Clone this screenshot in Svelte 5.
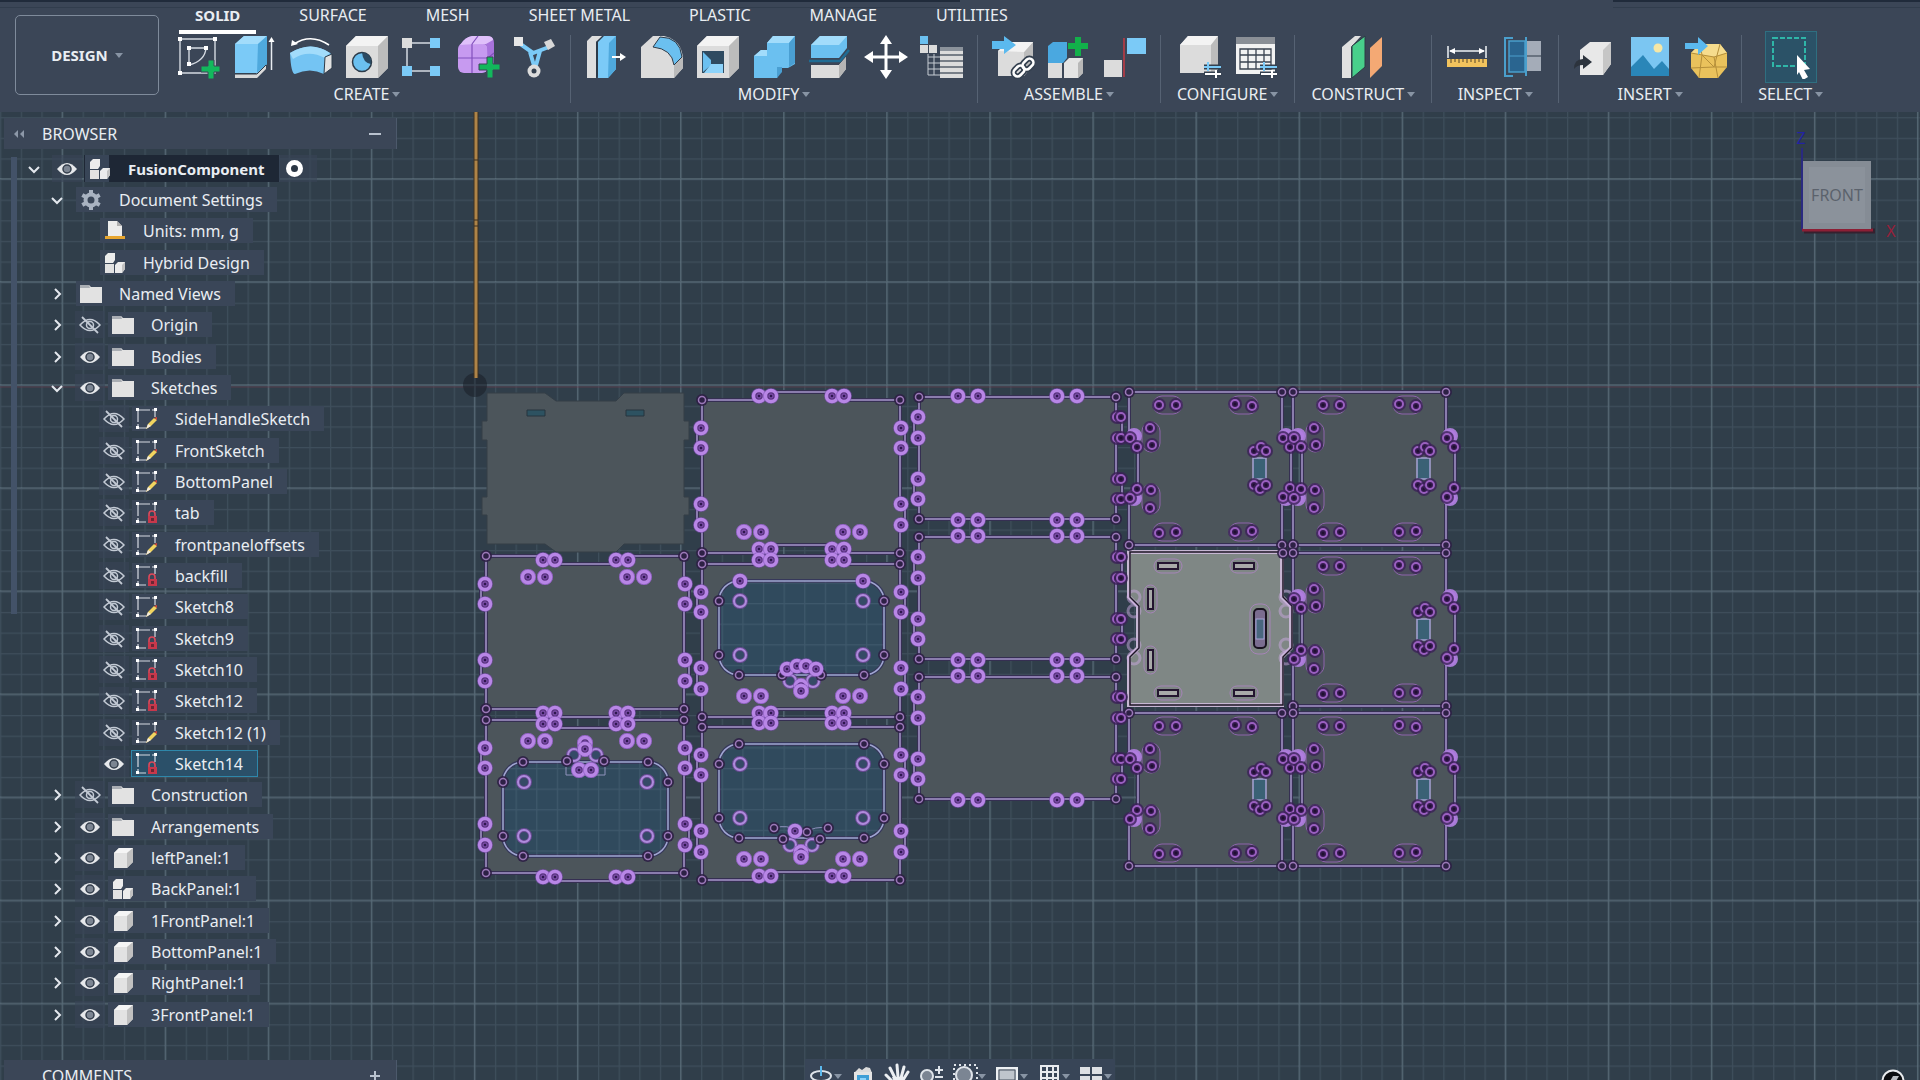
<script>
  const art = {
    sketch: `<path d="M3 4H38V38H3Z" fill="none" stroke="#d5dae2" stroke-width="1.4"/><path d="M12 13H29Q28 26 12 30Z" fill="none" stroke="#d5dae2" stroke-width="1.4"/><path d="M1 2h4v4h-4zM36 2h4v4h-4zM1 36h4v4h-4zM10 11h4v4h-4zM27 11h4v4h-4zM10 27h4v4h-4z" fill="#fff"/><path d="M31 25h6v6h6v6h-6v7h-6v-7h-7v-6h7z" fill="#12b85c" stroke="#3b4657"/>`,
    extrude: `<path d="M2 39L23 39L33 27V34L24 43H2Z" fill="#d9d9d9"/><path d="M2 9L11 1H34V29L24 38H2Z" fill="#7bcaf7"/><path d="M2 9L11 1H34L25 9Z" fill="#a2dcfb"/><path d="M34 1V29L24 38L25 9Z" fill="#4fa9dd"/><path d="M2 39H24L33 30" fill="none" stroke="#2d3a48"/><path d="M38.500 6V35" stroke="#e8edf2" stroke-width="1.5"/><path d="M35.500 7L38.500 2L41.500 7Z" fill="#fff"/>`,
    revolve: `<path d="M1 18Q22 5 41 18L43 20L35 39Q21 32 6 39Q2 39 1 18Z" fill="#74c4f3"/><path d="M1 18Q22 5 41 18Q37 20 36 23Q19 14 4 24Z" fill="#a2dcfb"/><path d="M36 22L43 19V33L35 39Z" fill="#e2e2e2" stroke="#2d3a48"/><path d="M5 9Q22-2 40 10" fill="none" stroke="#fff" stroke-width="1.600"/><path d="M2 11L3 5L9 9Z" fill="#fff"/>`,
    hole: `<path d="M1 11L11 1H43V33L33 43H1Z" fill="#dcdcdc"/><path d="M1 11L11 1H43L33 11Z" fill="#f3f3f3"/><path d="M43 1V33L33 43V11Z" fill="#bcbcbc"/><circle cx="17" cy="27" r="9.500" fill="#6bc0f0" stroke="#2d3a48" stroke-width="1.500"/><path d="M17 17.500A9.500 9.500 0 0 1 26 29Q18 28 17 17.500Z" fill="#2b4a63"/>`,
    pattern: `<path d="M6 8H34M6 8V36H34" fill="none" stroke="#d5dae2" stroke-width="1.500"/><path d="M1 3h10v10h-10z" fill="#dcdcdc"/><path d="M29 3h10v10h-10zM1 31h10v10h-10zM29 31h10v10h-10z" fill="#7bcaf7"/>`,
    form: `<rect x="1" y="8" width="30" height="30" rx="6" fill="#c79af0"/><path d="M3 10Q8 2 15 1H30Q37 1 37 8V28Q36 33 31 35L30 12Q30 9 26 9Z" fill="#a873dc"/><path d="M3 10Q8 2 15 1H30Q36 1 36 5L29 9Z" fill="#dfc0fa"/><path d="M15 9V38M1 23H31L37 18M15 9L21 1" fill="none" stroke="#8250bd" stroke-width="1.200"/><path d="M30 22h6v7h7v6h-7v8h-6v-8h-8v-6h8z" fill="#12b85c" stroke="#3b4657"/>`,
    derive: `<path d="M6 8L20 18L36 12M17 17L22 34L27 16" fill="none" stroke="#7bcaf7" stroke-width="4"/><path d="M1 2h9v9h-9z" fill="#e6e6e6"/><path d="M31 7L38 4L42 11L35 15Z" fill="#d8d8d8"/><circle cx="21" cy="36" r="6.500" fill="#dcdcdc"/><circle cx="21" cy="36" r="2.500" fill="#34404f"/>`,
    presspull: `<path d="M3 6L8 1H18L12 7V43H3Z" fill="#dedede"/><path d="M12 7L19 1V36L12 43Z" fill="#2d3a48"/><path d="M14 7L20 1H32V34L24 43H14Z" fill="#7bcaf7"/><path d="M25 8L32 1V34L24 43Z" fill="#4fa9dd"/><path d="M28 22H38" stroke="#fff" stroke-width="2"/><path d="M36 18L42 22L36 26Z" fill="#fff"/>`,
    fillet: `<path d="M1 12L13 1H24Q42 5 43 24V33L34 43H1Z" fill="#dcdcdc"/><path d="M34 30L43 20V33L34 43Z" fill="#bababa"/><path d="M13 12L20 2Q40 2 42 22L34 30Q32 14 13 12Z" fill="#6bc0f0" stroke="#2d3a48"/>`,
    shell: `<path d="M1 11L11 1H43V33L33 43H1Z" fill="#dcdcdc"/><path d="M1 11L11 1H43L33 11Z" fill="#f3f3f3"/><path d="M43 1V33L33 43V11Z" fill="#bcbcbc"/><path d="M6 16H28V38H6Z" fill="#2f4b61"/><path d="M7 17L15 25V30L7 37Z" fill="#6bc0f0"/><path d="M8 38L15 29H27V38Z" fill="#8dd3fa"/>`,
    combine: `<path d="M2 21L9 15H15V8L21 1H43V29L36 33H30L25 43H2Z" fill="#6bc0f0"/><path d="M15 8L21 1H43L37 8Z" fill="#a2dcfb"/><path d="M43 1V28L37 32V8Z" fill="#4a9fd2"/><path d="M2 21L9 15H15V21Z" fill="#a2dcfb"/><path d="M30 32V37L25 43V32Z" fill="#4a9fd2"/>`,
    split: `<path d="M3 10L12 1H39V13L31 23H3Z" fill="#6bc0f0"/><path d="M3 10L12 1H39L31 10Z" fill="#a2dcfb"/><path d="M3 30H31L38 22V34L31 43H3Z" fill="#dcdcdc"/><path d="M31 30L38 22V34L31 43Z" fill="#b5b5b5"/><path d="M1 26H32L41 15" fill="none" stroke="#1f6c94" stroke-width="2.500"/>`,
    move: `<path d="M22 5V39M5 22H39" stroke="#fff" stroke-width="3"/><path d="M22 0L28 9H16ZM22 44L28 35H16ZM0 22L9 16V28ZM44 22L35 16V28Z" fill="#fff"/>`,
    params: `<path d="M0 1h8v8h-8z" fill="#6bc0f0"/><path d="M0 10h8v8h-8zM9 10h8v8h-8z" fill="#dcdcdc"/><path d="M8 19V40M14 19V40M8 22H20M8 28H20M8 34H20M8 40H20" stroke="#c7ccd4" fill="none"/><path d="M20 12H43V43H20Z" fill="#dcdcdc"/><path d="M20 12H43V16H20Z" fill="#8b929b"/><path d="M20 20H43M20 26H43M20 32H43M20 38H43" stroke="#555f6b" stroke-width="1.300"/>`,
    insertcomp: `<path d="M7 16L17 7H42V30L33 41H7Z" fill="#dcdcdc"/><path d="M42 7V30L33 41V17Z" fill="#bcbcbc"/><path d="M7 16L17 7H42L33 17Z" fill="#f3f3f3"/><path d="M1 6H13V1L25 10L13 19V14H1Z" fill="#5bb9ee"/><g fill="none" stroke="#34404f" stroke-width="6"><rect x="22" y="32" width="12" height="8" rx="4" transform="rotate(-45 28 36)"/><rect x="31" y="25" width="12" height="8" rx="4" transform="rotate(-45 37 29)"/></g><g fill="none" stroke="#fff" stroke-width="2.600"><rect x="22" y="32" width="12" height="8" rx="4" transform="rotate(-45 28 36)"/><rect x="31" y="25" width="12" height="8" rx="4" transform="rotate(-45 37 29)"/></g>`,
    newcomp: `<path d="M1 11L6 7H20V23L16 28H1Z" fill="#4aa8e0"/><path d="M1 28H15V43H1Z" fill="#dcdcdc"/><path d="M17 28L22 23H36V38L31 43H17Z" fill="#e4e4e4"/><path d="M31 28L36 23V38L31 43Z" fill="#b8b8b8"/><path d="M28 2h6v6h7v6h-7v7h-6v-7h-7v-6h7z" fill="#12b04a"/>`,
    joint: `<path d="M1 25h18v17h-18z" fill="#dcdcdc"/><path d="M24 3h19v16h-19z" fill="#7bcaf7"/><path d="M21 3V42" stroke="#c73a42" stroke-width="1.500"/>`,
    config: `<path d="M2 10L10 1H40V34L37 38H2Z" fill="#dcdcdc"/><path d="M2 10L10 1H40L33 10Z" fill="#f3f3f3"/><path d="M40 1V34L33 38V10Z" fill="#bcbcbc"/><path d="M26 32H43M26 39H43" stroke="#34404f" stroke-width="5"/><path d="M26 32H43" stroke="#7bcaf7" stroke-width="2"/><path d="M27 39H43" stroke="#fff" stroke-width="2"/><path d="M30 27V36" stroke="#7bcaf7" stroke-width="2"/><path d="M38 35V43" stroke="#fff" stroke-width="2"/>`,
    table: `<path d="M2 2H41V39H2Z" fill="#f2f2f2"/><path d="M2 2H41V9H2Z" fill="#8a8f96"/><path d="M6 14H37V34H6ZM6 20H37M6 27H37M14 14V34M22 14V34M30 14V34" fill="none" stroke="#3a4350" stroke-width="1.300"/><path d="M26 32H43M26 39H43" stroke="#34404f" stroke-width="5"/><path d="M26 32H43" stroke="#7bcaf7" stroke-width="2"/><path d="M27 39H43" stroke="#fff" stroke-width="2"/><path d="M30 27V36" stroke="#7bcaf7" stroke-width="2"/><path d="M38 35V43" stroke="#fff" stroke-width="2"/>`,
    plane: `<path d="M1 12L14 1H20L10 12V43H1Z" fill="#e0e0e0"/><path d="M11 11L24 1V32L11 43Z" fill="#48cf8b" stroke="#2c3a44"/><path d="M29 13L41 2V31L29 43Z" fill="#f4a974"/>`,
    measure: `<path d="M3 11V23M41 11V23M5 16H39" stroke="#f0f3f6" stroke-width="1.500"/><path d="M4 16L10 13V19ZM40 16L34 13V19Z" fill="#fff"/><path d="M2 24H42V32H2Z" fill="#f2c35d"/><path d="M6 24v4M10 24v3M14 24v4M18 24v3M22 24v4M26 24v3M30 24v4M34 24v3M38 24v4" stroke="#54452a"/>`,
    section: `<path d="M12 3H4V41H12" fill="none" stroke="#4a9fcc" stroke-width="2"/><path d="M8 6H24V37H8Z" fill="#2a6590" stroke="#4a9fcc" stroke-width="1.500"/><path d="M8 21H24" stroke="#4a9fcc"/><path d="M25 6H40V36H25Z" fill="#a4acb8"/><path d="M25 21H40" stroke="#56606e" stroke-width="1.500"/><path d="M25 2V41" stroke="#4a9fcc" stroke-width="2"/>`,
    import: `<path d="M8 15L18 7H39V29L31 40H8Z" fill="#e8e8e8"/><path d="M39 7V29L31 40V15Z" fill="#c6c6c6"/><path d="M2 34Q2 24 11 24V20L20 27L11 34V30Q5 30 2 34Z" fill="#2c333d"/>`,
    image: `<path d="M3 2H41V41H3Z" fill="#7bc6f2"/><path d="M3 32L15 20L26 34L34 26L41 34V41H3Z" fill="#2a86b8"/><circle cx="30" cy="13" r="4.500" fill="#f5e7a6"/>`,
    mesh: `<path d="M7 18L16 9H36L43 18V32L34 43H15L7 33Z" fill="#eac25c"/><path d="M16 9L36 9L43 18L30 22L7 18Z" fill="#f6dc8d"/><path d="M7 18L30 22L43 18M30 22L34 43M15 43L18 20L16 9M7 33L30 32L43 32M18 20L30 32L36 9" fill="none" stroke="#b58f3a"/><path d="M1 8H14V2L24 11L14 20V14H1Z" fill="#5bb9ee"/>`,
    select: `<path d="M4 3H36V31H4Z" fill="none" stroke="#2fb6a8" stroke-width="2" stroke-dasharray="5 2"/><path d="M28 20L41 34L35 35L39 42L34 45L30 37L28 40Z" fill="#fff"/>`
  };

  const tabs = ['SOLID', 'SURFACE', 'MESH', 'SHEET METAL', 'PLASTIC', 'MANAGE', 'UTILITIES'];
  const groups = [
    { label: 'CREATE', icons: ['sketch', 'extrude', 'revolve', 'hole', 'pattern', 'form', 'derive'] },
    { label: 'MODIFY', icons: ['presspull', 'fillet', 'shell', 'combine', 'split', 'move', 'params'] },
    { label: 'ASSEMBLE', icons: ['insertcomp', 'newcomp', 'joint'] },
    { label: 'CONFIGURE', icons: ['config', 'table'] },
    { label: 'CONSTRUCT', icons: ['plane'] },
    { label: 'INSPECT', icons: ['measure', 'section'] },
    { label: 'INSERT', icons: ['import', 'image', 'mesh'] },
    { label: 'SELECT', icons: ['select'] }
  ];

  const small = {
    comp: `<path d="M1 4L4 1H11V8L9 11H1Z" fill="#ececec"/><path d="M1 12H10V21H1Z" fill="#e2e2e2"/><path d="M11 13L14 10H21V17L18 21H11Z" fill="#ececec"/><path d="M18 13L21 10V17L18 21Z" fill="#c2c2c2"/>`,
    gear: `<circle cx="11" cy="11" r="5.500" fill="none" stroke="#a9b3c1" stroke-width="4"/><path d="M11 1V5M11 17V21M2.300 6L6 8M16 14L19.700 16M2.300 16L6 14M16 8L19.700 6" stroke="#a9b3c1" stroke-width="4"/>`,
    units: `<path d="M4 1H13L18 6V16H4Z" fill="#ececec"/><path d="M13 1V6H18Z" fill="#b0b0b0"/><path d="M1 16H21V19H1Z" fill="#e7a52f"/>`,
    folder: `<path d="M0 2H9L11 4H22V20H0Z" fill="#e2e2e2"/><path d="M0 2H9L10 5H0Z" fill="#a9adb3"/>`,
    body: `<path d="M2 6L7 1H21V15L15 21H2Z" fill="#e2e2e2"/><path d="M2 6L7 1H21L15 6Z" fill="#f5f5f5"/><path d="M21 1V15L15 21V6Z" fill="#c0c0c0"/>`,
    pencil: `<path d="M2 2V20H10M2 2H19V9" fill="none" stroke="#d5dae2" stroke-width="1.200" stroke-dasharray="12 2"/><path d="M0 0h3v3h-3zM18 0h3v3h-3zM0 18h3v3h-3z" fill="#fff"/><path d="M10 21L12 16L18 10L21 12L15 18Z" fill="#f1d45f"/><path d="M18 10L21 12V9Z" fill="#cf4a3c"/><path d="M10 21L12 16L15 18Z" fill="#f4ece0"/>`,
    lock: `<path d="M2 2V20H10M2 2H19V9" fill="none" stroke="#d5dae2" stroke-width="1.200" stroke-dasharray="12 2"/><path d="M0 0h3v3h-3zM18 0h3v3h-3zM0 18h3v3h-3z" fill="#fff"/><path d="M13 14V12Q13 9 16 9T19 12V14" fill="none" stroke="#e0485a" stroke-width="1.600"/><path d="M12 14H21V21H12Z" fill="#c7384b"/><path d="M15 16h3v3h-3z" fill="#6b2634"/>`
  };

  const rows = [
    { d: 0, open: true, eye: 'on', icon: 'comp', t: 'FusionComponent', root: true },
    { d: 1, open: true, icon: 'gear', t: 'Document Settings' },
    { d: 2, icon: 'units', t: 'Units: mm, g' },
    { d: 2, icon: 'comp', t: 'Hybrid Design' },
    { d: 1, open: false, icon: 'folder', t: 'Named Views' },
    { d: 1, open: false, eye: 'off', icon: 'folder', t: 'Origin' },
    { d: 1, open: false, eye: 'on', icon: 'folder', t: 'Bodies' },
    { d: 1, open: true, eye: 'on', icon: 'folder', t: 'Sketches' },
    { d: 2, eye: 'off', icon: 'pencil', t: 'SideHandleSketch' },
    { d: 2, eye: 'off', icon: 'pencil', t: 'FrontSketch' },
    { d: 2, eye: 'off', icon: 'pencil', t: 'BottomPanel' },
    { d: 2, eye: 'off', icon: 'lock', t: 'tab' },
    { d: 2, eye: 'off', icon: 'pencil', t: 'frontpaneloffsets' },
    { d: 2, eye: 'off', icon: 'lock', t: 'backfill' },
    { d: 2, eye: 'off', icon: 'pencil', t: 'Sketch8' },
    { d: 2, eye: 'off', icon: 'lock', t: 'Sketch9' },
    { d: 2, eye: 'off', icon: 'lock', t: 'Sketch10' },
    { d: 2, eye: 'off', icon: 'lock', t: 'Sketch12' },
    { d: 2, eye: 'off', icon: 'pencil', t: 'Sketch12 (1)' },
    { d: 2, eye: 'on', icon: 'lock', t: 'Sketch14', selected: true },
    { d: 1, open: false, eye: 'off', icon: 'folder', t: 'Construction' },
    { d: 1, open: false, eye: 'on', icon: 'folder', t: 'Arrangements' },
    { d: 1, open: false, eye: 'on', icon: 'body', t: 'leftPanel:1' },
    { d: 1, open: false, eye: 'on', icon: 'comp', t: 'BackPanel:1' },
    { d: 1, open: false, eye: 'on', icon: 'body', t: '1FrontPanel:1' },
    { d: 1, open: false, eye: 'on', icon: 'body', t: 'BottomPanel:1' },
    { d: 1, open: false, eye: 'on', icon: 'body', t: 'RightPanel:1' },
    { d: 1, open: false, eye: 'on', icon: 'body', t: '3FrontPanel:1' }
  ];

  const navTools = [
    { t: 'Orbit', menu: true, a: `<ellipse cx="13" cy="13" rx="10" ry="5" fill="none" stroke="#dfe4ea" stroke-width="2"/><path d="M13 3V13" stroke="#5bb9ee" stroke-width="2"/>` },
    { t: 'Look at', a: `<path d="M4 10L9 5L12 7L16 4L20 5L22 10Z" fill="#dcdcdc"/><path d="M4 9H22V23H4Z" fill="#e4e4e4"/><path d="M7 12H19V23H7Z" fill="#3f9fd6"/><path d="M10 15H16V21H10Z" fill="#8dd3fa"/>` },
    { t: 'Pan', a: `<path d="M9 19L2 12M11 15L6 5M14 14L13 2M17 15L20 4M19 17L24 9" stroke="#eceff2" stroke-width="3" stroke-linecap="round"/><path d="M8 14H20L18 24H12Z" fill="#eceff2"/>` },
    { t: 'Zoom', a: `<circle cx="9" cy="13" r="6" fill="#7b8593" stroke="#dfe4ea" stroke-width="2"/><path d="M17 7H25M21 3V11M17 14H25" stroke="#dfe4ea" stroke-width="2"/>` },
    { t: 'Fit', menu: true, a: `<path d="M2 2H25V24H2Z" fill="none" stroke="#dfe4ea" stroke-width="2" stroke-dasharray="2 3"/><circle cx="12" cy="12" r="8" fill="#7b8593" stroke="#dfe4ea" stroke-width="2"/>` },
    { t: 'Display settings', menu: true, a: `<path d="M3 5H23V19H3Z" fill="#bfc5cc" stroke="#edf0f3" stroke-width="2"/><path d="M5 7H21V17H5Z" fill="none" stroke="#46505e"/>` },
    { t: 'Grid and snaps', menu: true, a: `<path d="M5 3H22V21H5ZM11 3V21M17 3V21M5 9H22M5 15H22" fill="none" stroke="#e8ebef" stroke-width="2"/>` },
    { t: 'Viewports', menu: true, a: `<path d="M2 4h10v7h-10zM14 4h10v7h-10zM2 13h10v8h-10zM14 13h10v8h-10z" fill="#dde0e4"/>` }
  ];

  const pts = (l) => l.map((p) => p.join(',')).join(' ');
  const plates = [];
  const windows = [];
  const bright = [];
  const mid = [];
  const corners = [];
  const rings = [];
  const glow = [];
  const pills = [];
  const handles = [];

  const wide = [
    { x: 702, y: 400, s: -1 },
    { x: 702, y: 564, s: -1, win: 17 },
    { x: 702, y: 727, s: -1, win: 17 },
    { x: 486, y: 556, s: 1 },
    { x: 486, y: 720, s: 1, win: 42 }
  ];
  for (const { x, y, s, win } of wide) {
    const r = x + 198;
    const b = y + 153;
    plates.push(pts([[x, y], [x + 58, y], [x + 70, y + 8 * s], [x + 130, y + 8 * s], [x + 142, y], [r, y],
      [r, y + 28], [r + 5, y + 28], [r + 5, y + 48], [r, y + 48], [r, y + 104], [r + 5, y + 104], [r + 5, y + 125], [r, y + 125], [r, b],
      [x + 142, b], [x + 130, b + 8 * s], [x + 70, b + 8 * s], [x + 58, b], [x, b],
      [x, y + 125], [x - 5, y + 125], [x - 5, y + 104], [x, y + 104], [x, y + 48], [x - 5, y + 48], [x - 5, y + 28], [x, y + 28]]));
    for (const h of [28, 48, 104, 125]) bright.push([x - 1, y + h], [r + 1, y + h]);
    for (const e of [y, b]) {
      bright.push([x + 57, e + 4 * s], [x + 69, e + 4 * s], [x + 130, e + 4 * s], [x + 142, e + 4 * s]);
      corners.push([x, e], [r, e]);
    }
    const py = s < 0 ? b - 21 : y + 21;
    for (const dx of [42, 141]) {
      bright.push([x + dx, py], [x + dx + 17, py]);
      glow.push([x + dx, py], [x + dx + 17, py]);
    }
    if (win) {
      const wx = x + 17;
      const wy = y + win;
      windows.push([wx, wy]);
      corners.push([wx, wy + 20], [wx + 165, wy + 20], [wx, wy + 74], [wx + 165, wy + 74], [wx + 20, wy], [wx + 145, wy], [wx + 20, wy + 94], [wx + 145, wy + 94]);
      rings.push([wx + 21, wy + 20], [wx + 144, wy + 20], [wx + 21, wy + 74], [wx + 144, wy + 74]);
    }
  }
  bright.push([740, 581], [863, 581]);
  bright.push([787, 669], [797, 666], [806, 666], [816, 669], [801, 686], [801, 691]);
  glow.push([801, 686], [801, 691], [801, 852], [801, 857], [585, 743], [585, 749], [579, 770], [591, 770]);
  corners.push([782, 675], [821, 675], [774, 828], [828, 828], [807, 832], [783, 839], [820, 839], [567, 761], [604, 761]);
  rings.push([790, 681], [813, 681], [790, 845], [812, 845], [574, 755], [596, 755]);
  bright.push([795, 831], [801, 852], [801, 857], [585, 743], [585, 749], [579, 770], [591, 770]);

  for (const y of [397, 537, 677]) {
    const x = 919;
    const r = 1116;
    const b = y + 122;
    plates.push(pts([[x, y], [r, y], [r, y + 20], [r + 6, y + 20], [r + 6, y + 41], [r, y + 41], [r, y + 82], [r + 6, y + 82], [r + 6, y + 102], [r, y + 102], [r, b],
      [x, b], [x, y + 102], [x - 5, y + 102], [x - 5, y + 82], [x, y + 82], [x, y + 41], [x - 5, y + 41], [x - 5, y + 20], [x, y + 20]]));
    for (const h of [20, 41, 82, 102]) {
      bright.push([x - 1, y + h]);
      mid.push([r + 1, y + h], [r + 5, y + h]);
    }
    for (const dx of [39, 59, 138, 158]) bright.push([x + dx, y - 1], [x + dx, b + 1]);
    corners.push([x, y], [r, y], [x, b], [r, b]);
  }

  const notched = (x, y) => pts([[x, y], [x + 153, y], [x + 153, y + 45], [x + 162, y + 54], [x + 162, y + 96], [x + 153, y + 105], [x + 153, y + 153],
    [x, y + 153], [x, y + 105], [x + 9, y + 96], [x + 9, y + 54], [x, y + 45]]);
  const tall = [[1129, 392], [1129, 713], [1293, 392], [1293, 553], [1293, 713]];
  for (const [x, y] of tall) {
    plates.push(notched(x, y));
    corners.push([x, y], [x + 153, y], [x, y + 153], [x + 153, y + 153]);
    glow.push([x + 5, y + 44], [x + 5, y + 106], [x + 157, y + 44], [x + 157, y + 106]);
    mid.push([x + 1, y + 46], [x + 8, y + 55], [x + 8, y + 97], [x + 1, y + 106], [x + 154, y + 46], [x + 161, y + 55], [x + 161, y + 96], [x + 154, y + 105],
      [x + 21, y + 36], [x + 23, y + 53], [x + 22, y + 98], [x + 21, y + 116],
      [x + 30, y + 13], [x + 47, y + 13], [x + 106, y + 12], [x + 123, y + 14],
      [x + 30, y + 141], [x + 47, y + 140], [x + 106, y + 140], [x + 123, y + 139],
      [x + 125, y + 59], [x + 132, y + 55], [x + 137, y + 59], [x + 125, y + 93], [x + 131, y + 97], [x + 137, y + 93]);
    for (const [px, py] of [[24, 4], [100, 4], [24, 131], [100, 131]]) pills.push([x + px, y + py, 29, 18]);
    for (const py of [30, 92]) pills.push([x + 13, y + py, 18, 30]);
    handles.push([x + 124, y + 66]);
  }
  corners.push([1283, 553]);
  const lightSlots = [[1158, 563, 20, 6], [1234, 563, 20, 6], [1158, 690, 20, 6], [1234, 690, 20, 6], [1148, 589, 5, 20], [1148, 650, 5, 20]];
</script>

{#snippet eye(state)}
  <svg width="22" height="22" viewBox="0 0 22 22" aria-hidden="true">
    {#if state === 'on'}
      <path d="M1 11Q11-1 21 11Q11 23 1 11Z" fill="#e6e8eb" />
      <circle cx="11" cy="11" r="4" fill="#7c8592" stroke="#353f4d" stroke-width="1.500" />
    {:else}
      <path d="M1 11Q11 0 21 11Q11 22 1 11Z" fill="none" stroke="#c3cad4" stroke-width="1.500" />
      <circle cx="11" cy="11" r="3.500" fill="none" stroke="#c3cad4" stroke-width="1.500" />
      <path d="M3 3L19 19" stroke="#c3cad4" stroke-width="1.800" />
    {/if}
  </svg>
{/snippet}

<div class="app">
  <header class="toolbar">
    <button class="design">DESIGN<span class="caret"></span></button>
    <div class="ribbon">
      <nav class="tabs">
        {#each tabs as tab, i}
          <button class="tab" class:active={i === 0}>{tab}</button>
        {/each}
      </nav>
      <div class="groups">
        {#each groups as group}
          <section class="group">
            <div class="icons">
              {#each group.icons as name}
                <button class="tool" class:picked={name === 'select'} aria-label={name}>
                  <svg width="44" height="44" viewBox="0 0 44 44" aria-hidden="true">{@html art[name]}</svg>
                </button>
              {/each}
            </div>
            <button class="menu">{group.label}<span class="caret"></span></button>
          </section>
        {/each}
      </div>
    </div>
  </header>

  <main class="workspace">
    <svg class="canvas" width="100%" height="100%" aria-label="Model canvas">
      <defs>
        <pattern id="minor" x="62" y="273.160" width="20.616" height="20.616" patternUnits="userSpaceOnUse">
          <path d="M0.500 0V21M0 0.500H21" stroke="#8aa5b4" stroke-opacity=".16" stroke-width="1.500" />
        </pattern>
        <pattern id="major" x="61.500" y="272.160" width="103.080" height="103.080" patternUnits="userSpaceOnUse">
          <path d="M0.700 0V104M0 0.700H104" stroke="#9bb3bd" stroke-opacity=".28" stroke-width="1.400" />
        </pattern>
        <g id="bright">
          <circle r="8" fill="#7a4bb0" opacity=".6" />
          <circle r="5.500" fill="#5a3480" stroke="#b886e6" stroke-width="3.500" />
          <circle r="2" fill="#2f1650" stroke="#8a58ba" stroke-width="1" />
        </g>
        <g id="mid">
          <circle r="7" fill="#3b2158" opacity=".8" />
          <circle r="4" fill="#341a4e" stroke="#9a5fc0" stroke-width="2" />
          <circle r="1.500" fill="#1f1030" />
        </g>
        <g id="corner">
          <circle r="6" fill="#2d2045" opacity=".9" />
          <circle r="3.500" fill="#2d2045" stroke="#9b78b8" stroke-width="1.500" />
        </g>
      </defs>
      <rect width="100%" height="100%" fill="#303e4a" />
      <rect width="100%" height="100%" fill="url(#minor)" />
      <rect width="100%" height="100%" fill="url(#major)" />
      <g transform="translate(0 -112)">
        <path d="M0 387H1920" stroke="#6e3a4a" stroke-opacity=".6" />
        <circle cx="475" cy="385" r="12" fill="#1f2730" opacity=".75" />
        <path d="M475 373V397M463 385H487" stroke="#36434f" />
        <path d="M476 112V378" stroke="#3a2f20" stroke-width="5" />
        <path d="M476 112V378" stroke="#ae8448" stroke-width="3" />
        <path d="M474 220h4M474 226h4M474 160h4" stroke="#3a2f20" />

        <path d="M487 393H545L556 401H616L624 393H684V421H689V440H684V497H689V515H684V544H624L616 552H556L545 544H487V515H482V497H487V440H482V421H487Z" fill="#4c555b" stroke="#343e47" />
        <path d="M527 410h18v6h-18zM626 410h18v6h-18z" fill="#2d5261" stroke="#26343f" />

        {#each plates as p}
          <polygon points={p} fill="#4c555b" stroke="#352f52" stroke-width="4" />
          <polygon points={p} fill="none" stroke="#a696cb" stroke-width="1.500" />
        {/each}
        {#each windows as [x, y]}
          <rect {x} {y} width="165" height="94" rx="20" fill="#304a5d" stroke="#36385a" stroke-width="4" />
          <rect {x} {y} width="165" height="94" rx="20" fill="url(#minor)" />
          <rect {x} {y} width="165" height="94" rx="20" fill="none" stroke="#a0a6d2" stroke-width="1.500" />
        {/each}
        <path d="M566 767V775H605V767M774 828Q789 824 795 831M807 832Q814 826 828 828" fill="none" stroke="#8f92bd" />

        <polygon points={notched(1129, 552)} fill="#7f8785" stroke="#c6b6d3" stroke-width="4" />
        {#each [[1134, 597], [1134, 658], [1286, 597], [1286, 658], [1134, 611], [1134, 645], [1286, 611], [1286, 645]] as [cx, cy]}
          <circle {cx} {cy} r="6" fill="none" stroke="#c9a8e0" stroke-width="3" opacity=".5" />
        {/each}
        <polygon points={notched(1130, 552)} fill="none" stroke="#1c1524" stroke-width="1.500" />
        {#each lightSlots as [x, y, w, h]}
          <rect x={x - 4} y={y - 4} width={w + 8} height={h + 8} rx="7" fill="none" stroke="#a684b8" />
          <rect {x} {y} width={w} height={h} fill="#a9aaa9" stroke="#241530" stroke-width="2" />
        {/each}
        <rect x="1250" y="604" width="20" height="50" rx="8" fill="none" stroke="#a684b8" />
        <rect x="1254" y="609" width="12" height="39" rx="4" fill="#7b6d90" stroke="#19121f" stroke-width="2" />
        <rect x="1256" y="619" width="8" height="20" fill="#49677f" stroke="#a6a2d4" />

        {#each pills as [x, y, w, h]}
          <rect {x} {y} width={w} height={h} rx="9" fill="#49395d" fill-opacity=".35" stroke="#8d64ac" />
        {/each}
        {#each handles as [x, y]}
          <rect {x} {y} width="13" height="21" fill="#3a6175" stroke="#a6a2d4" stroke-width="1.500" />
        {/each}
        {#each glow as [cx, cy]}
          <circle {cx} {cy} r="7" fill="#b07ce0" stroke="#a77bd4" stroke-width="2" />
        {/each}
        {#each rings as [cx, cy]}
          <circle {cx} {cy} r="6" fill="#354a66" stroke="#6a4a94" stroke-width="4" />
          <circle {cx} {cy} r="6" fill="none" stroke="#ae8bdc" stroke-width="2" />
        {/each}
        {#each corners as [x, y]}<use href="#corner" {x} {y} />{/each}
        {#each bright as [x, y]}<use href="#bright" {x} {y} />{/each}
        {#each mid as [x, y]}<use href="#mid" {x} {y} />{/each}
      </g>
    </svg>

    <aside class="sidebar">
      <div class="panel-head">
        <button class="collapse" aria-label="Collapse">
          <svg width="12" height="10" viewBox="0 0 12 10"><path d="M5 1L1 5L5 9ZM11 1L7 5L11 9Z" fill="#8d98a8" /></svg>
        </button>
        <h2>BROWSER</h2>
        <button class="head-action" aria-label="Minimize">
          <svg width="12" height="12" viewBox="0 0 12 12"><path d="M0 5H12V7H0Z" fill="#b9c2ce" /></svg>
        </button>
      </div>
      <div class="tree-wrap">
        <div class="scrollbar"></div>
        <ul class="tree">
          {#each rows as row}
            <li class="row depth{row.d}">
              {#if row.open !== undefined}
                <button class="chevron" aria-label="Toggle {row.t}">
                  <svg width="14" height="14" viewBox="0 0 14 14">
                    <path d={row.open ? 'M2 5L7 10L12 5' : 'M5 2L10 7L5 12'} fill="none" stroke="#e4e8ee" stroke-width="2" />
                  </svg>
                </button>
              {:else}
                <span class="chevron"></span>
              {/if}
              {#if row.eye}
                <button class="eye" aria-label="Visibility of {row.t}">{@render eye(row.eye)}</button>
              {/if}
              <button class="node" class:root={row.root} class:selected={row.selected}>
                <svg width="22" height="22" viewBox="0 0 22 22" aria-hidden="true">{@html small[row.icon]}</svg>
                <span>{row.t}</span>
              </button>
              {#if row.root}
                <label class="activate"><input type="radio" name="active" checked aria-label="Activate component" /></label>
              {/if}
            </li>
          {/each}
        </ul>
      </div>
      <div class="panel-head comments">
        <h2>COMMENTS</h2>
        <button class="head-action" aria-label="Add comment">
          <svg width="12" height="12" viewBox="0 0 12 12"><path d="M5 1H7V5H11V7H7V11H5V7H1V5H5Z" fill="#b9c2ce" /></svg>
        </button>
      </div>
    </aside>

    <svg class="cube" width="120" height="126" viewBox="0 0 120 126" aria-label="View cube">
      <text x="12" y="24" class="axis" fill="#2222a4" text-anchor="middle">Z</text>
      <path d="M13 28V110" stroke="#2a2a80" stroke-width="2" />
      <path d="M15 111H86" stroke="#35212f" stroke-width="5" />
      <path d="M13 110H84" stroke="#8c1f35" stroke-width="3" />
      <rect x="14" y="41" width="68" height="68" fill="#858c95" />
      <rect x="20" y="47" width="56" height="56" fill="#8b929b" />
      <text x="48" y="81" class="face" fill="#5b626c" text-anchor="middle">FRONT</text>
      <text x="102" y="117" class="axis" fill="#98203a" text-anchor="middle">X</text>
    </svg>

    <nav class="viewbar">
      {#each navTools as tool}
        <button aria-label={tool.t}>
          <svg width="26" height="26" viewBox="0 0 26 26" aria-hidden="true">{@html tool.a}</svg>
          {#if tool.menu}<span class="caret"></span>{/if}
        </button>
      {/each}
    </nav>

    <button class="assistant" aria-label="Assistant">
      <svg width="24" height="24" viewBox="0 0 24 24"><circle cx="12" cy="12" r="10.500" fill="#0b0d10" stroke="#e9ecef" stroke-width="2" /><path d="M8 14L12 7H18L14 14Z" fill="#b9bdc2" /></svg>
    </button>
  </main>
</div>

<style>
  :global(body) {
    background: #303e4a;
  }
  .app {
    display: flex;
    flex-direction: column;
    height: 100vh;
    overflow: hidden;
    color: #e9edf2;
    font-family: 'Noto Sans', 'Open Sans', sans-serif;
    font-size: 16px;
  }
  button {
    padding: 0;
    border: 0;
    background: none;
    color: inherit;
    font: inherit;
    white-space: nowrap;
  }
  svg {
    display: block;
    flex: none;
  }
  .caret {
    display: inline-block;
    border: 4px solid transparent;
    border-top: 5px solid #8894a4;
    border-bottom: 0;
  }
  .toolbar {
    display: flex;
    flex: none;
    height: 112px;
    background:
      linear-gradient(90deg, #202b3b 50%, transparent 50% 84%, #202b3b 84%) top / 100% 2px no-repeat,
      linear-gradient(90deg, #313d4d 50%, transparent 50% 84%, #313d4d 84%) 0 7px / 100% 1px no-repeat,
      #3b4657;
  }
  .design {
    display: flex;
    align-items: center;
    justify-content: center;
    gap: 7px;
    width: 144px;
    height: 80px;
    margin: 15px 5px 0 15px;
    border: 1px solid #7f8b9b;
    border-radius: 5px;
    font-weight: 700;
    font-size: 15px;
  }
  .tabs {
    display: flex;
    gap: 27px;
    padding-left: 15px;
  }
  .tab {
    padding: 0 16px;
    border-bottom: 4px solid transparent;
    line-height: 30px;
  }
  .tab.active {
    border-color: #fff;
    font-weight: 700;
    font-size: 15px;
  }
  .groups {
    display: flex;
    padding-top: 1px;
  }
  .group {
    display: flex;
    flex-direction: column;
    align-items: center;
    padding: 0 13px;
    border-right: 1px solid #566273;
  }
  .group:last-child {
    border-right: 0;
  }
  .icons {
    display: flex;
    gap: 12px;
  }
  .tool.picked {
    margin: -4px;
    padding: 4px;
    background: #2b5267;
    outline: 1px solid #2f6f80;
    outline-offset: -1px;
  }
  .menu {
    display: flex;
    align-items: center;
    gap: 3px;
    margin-top: 6px;
    padding: 0 3px;
    line-height: 18px;
  }
  .workspace {
    display: grid;
    flex: 1;
    min-height: 0;
    grid-template: minmax(0, 1fr) / minmax(0, 1fr);
    overflow: hidden;
  }
  .workspace > :global(*) {
    grid-area: 1 / 1;
  }
  .sidebar {
    display: flex;
    flex-direction: column;
    width: 397px;
    justify-self: start;
    padding-top: 6px;
  }
  .panel-head {
    display: flex;
    flex: none;
    align-items: center;
    height: 31px;
    margin-left: 4px;
    padding: 0 15px 0 9px;
    border-right: 1px solid #4c596b;
    background: #3b4657;
  }
  .panel-head h2 {
    flex: 1;
    margin: 0;
    font-size: 16px;
    font-weight: 400;
    line-height: 30px;
  }
  .collapse {
    width: 29px;
  }
  .comments {
    margin-top: 30px;
    padding-left: 38px;
  }
  .tree-wrap {
    display: flex;
    flex: none;
    padding: 4px 0 0 11px;
  }
  .scrollbar {
    flex: none;
    width: 6px;
    height: 457px;
    margin-top: 4px;
    background: #435268;
  }
  .tree {
    margin: 0;
    padding: 0;
    list-style: none;
  }
  .row {
    display: flex;
    align-items: center;
    height: 31px;
  }
  .row:nth-child(3n) {
    padding-bottom: 1px;
  }
  .depth0 {
    padding-left: 10px;
  }
  .depth1 {
    padding-left: 33px;
  }
  .depth2 {
    padding-left: 57px;
  }
  .chevron {
    width: 14px;
    margin-right: 11px;
  }
  .eye {
    display: flex;
    align-items: center;
    height: 27px;
    padding: 0 4px;
    background: #38455799;
  }
  .eye + .node {
    margin-left: 2px;
  }
  .node {
    display: flex;
    align-items: center;
    gap: 17px;
    height: 27px;
    padding: 0 14px 0 4px;
    border: 1px solid transparent;
    background: #3a4658;
    background-clip: padding-box;
  }
  .node.root {
    background: linear-gradient(90deg, #384557 24px, #1e2735 24px);
    font-weight: 700;
    font-size: 15px;
  }
  .node.selected {
    border-color: #2e87aa;
    background: #2b5069;
  }
  .activate {
    display: flex;
    align-items: center;
    height: 27px;
    padding: 0 14px 0 6px;
    background: #38455799;
  }
  .activate input {
    width: 17px;
    height: 17px;
    margin: 0;
    border: 5px solid #fff;
    border-radius: 50%;
    background: #2b3644;
    appearance: none;
  }
  .cube {
    align-self: start;
    justify-self: end;
    margin: 8px 11px 0 0;
  }
  .axis,
  .face {
    font-size: 16px;
  }
  .viewbar {
    display: flex;
    align-self: end;
    justify-self: center;
    gap: 8px;
    height: 34px;
    margin-bottom: -13px;
    padding: 0 3px;
    background: #384557;
  }
  .viewbar button {
    display: flex;
    align-items: center;
  }
  .assistant {
    align-self: end;
    justify-self: end;
    margin: 0 15px -13px 0;
  }
</style>
